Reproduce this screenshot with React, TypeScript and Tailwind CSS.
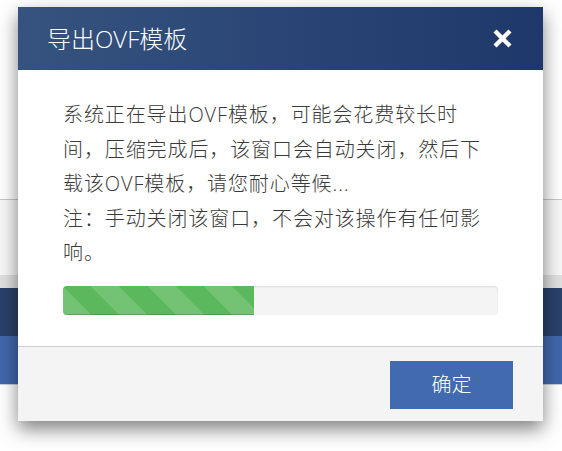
import React from 'react';

const font = { fontFamily: '"Open Sans", "Noto Sans CJK SC", sans-serif' };

export default function App() {
  const progress = 44;

  return (
    <div className="relative w-[562px] h-[451px] overflow-hidden bg-white font-light" style={font}>
      {/* page behind the dialog */}
      <div className="flex flex-col">
        <div className="h-[200px] bg-white border-b border-[#c8c8c8]" />
        <div className="h-[75px] bg-[#f7f7f7]" />
        <div className="h-[13px] bg-[#e0e0e0]" />
        <div className="h-[48px] bg-[#2b426b]" />
        <div className="h-[49px] bg-[#4168ad] border-b border-[#c9cfdc]" />
      </div>

      {/* dialog */}
      <div className="absolute left-[18px] top-[7px] w-[525px] bg-white shadow-[0_8px_18px_rgba(0,0,0,0.5)]">
        <div className="h-[63px] flex items-center justify-between pl-[29px] pr-[30px] bg-gradient-to-r from-[#36537f] to-[#1f386b]">
          <h2 className="text-[24px] text-white leading-none">导出OVF模板</h2>
          <button className="w-[21px] h-[21px] flex items-center justify-center">
            <svg width="21" height="21" viewBox="0 0 21 21">
              <path d="M3 3 L18 18 M18 3 L3 18" stroke="#fff" strokeWidth="4.4" strokeLinecap="butt" />
            </svg>
          </button>
        </div>

        <div className="px-[45px] pt-[28px] pb-[31px]">
          <p className="text-[20px] leading-[34.5px] tracking-[0.9px] text-[#3a3a3a]">
            系统正在导出OVF模板，可能会花费较长时间，压缩完成后，该窗口会自动关闭，然后下载该OVF模板，请您耐心等候...
            <br />
            注：手动关闭该窗口，不会对该操作有任何影响。
          </p>
          <div className="mt-[15px] h-[29px] rounded-[4px] bg-[#f4f4f4] shadow-[inset_0_1px_2px_rgba(0,0,0,0.1)] overflow-hidden">
            <div
              className="h-full bg-[#5cb85c] bg-[repeating-linear-gradient(45deg,rgba(255,255,255,0.15)_0_20px,transparent_20px_40px)] shadow-[inset_0_-1px_0_rgba(0,0,0,0.15)]"
              style={{ width: `${progress}%` }}
            />
          </div>
        </div>

        <div className="h-[75px] border-t border-[#cdcdd6] bg-[#f4f4f4] flex items-start justify-end pt-[14px] pr-[30px]">
          <button className="w-[123px] h-[48px] bg-[#416ab0] text-white text-[20px]">确定</button>
        </div>
      </div>
    </div>
  );
}
